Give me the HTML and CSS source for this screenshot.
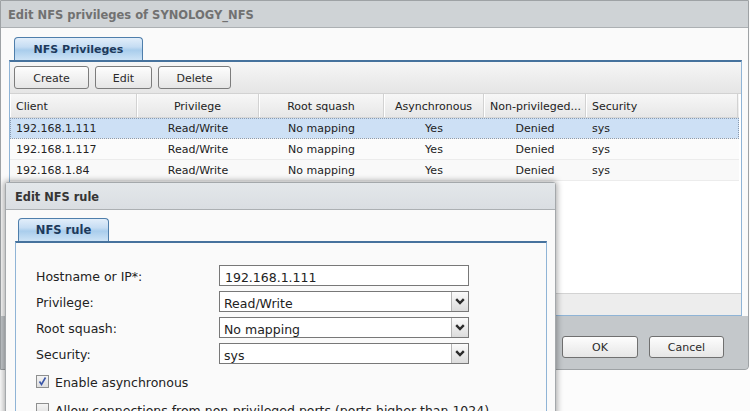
FILE: index.html
```html
<!DOCTYPE html>
<html>
<head>
<meta charset="utf-8">
<title>Edit NFS privileges</title>
<link rel="stylesheet" href="styles.css">
</head>
<body>
<div class="win outer">
  <div class="win-title outer-title">Edit NFS privileges of SYNOLOGY_NFS</div>
  <div class="win-body outer-body">
    <div class="tabs"><div class="tab tab-wide">NFS Privileges</div></div>
    <div class="panel outer-panel">
      <div class="toolbar">
        <button class="btn b-create">Create</button>
        <button class="btn b-edit">Edit</button>
        <button class="btn b-delete">Delete</button>
      </div>
      <div class="grid">
        <div class="grow ghead">
          <div class="gc left">Client</div>
          <div class="gc">Privilege</div>
          <div class="gc">Root squash</div>
          <div class="gc">Asynchronous</div>
          <div class="gc">Non-privileged...</div>
          <div class="gc left">Security</div>
        </div>
        <div class="grow gdata selected">
          <div class="gc left">192.168.1.111</div>
          <div class="gc">Read/Write</div>
          <div class="gc">No mapping</div>
          <div class="gc">Yes</div>
          <div class="gc">Denied</div>
          <div class="gc left">sys</div>
        </div>
        <div class="grow gdata">
          <div class="gc left">192.168.1.117</div>
          <div class="gc">Read/Write</div>
          <div class="gc">No mapping</div>
          <div class="gc">Yes</div>
          <div class="gc">Denied</div>
          <div class="gc left">sys</div>
        </div>
        <div class="grow gdata alt">
          <div class="gc left">192.168.1.84</div>
          <div class="gc">Read/Write</div>
          <div class="gc">No mapping</div>
          <div class="gc">Yes</div>
          <div class="gc">Denied</div>
          <div class="gc left">sys</div>
        </div>
      </div>
      <div class="grid-foot"></div>
    </div>
  </div>
  <div class="win-foot">
    <button class="btn b-ok">OK</button>
    <button class="btn b-cancel">Cancel</button>
  </div>
</div>

<div class="win inner">
  <div class="win-title inner-title">Edit NFS rule</div>
  <div class="win-body inner-body">
    <div class="tabs"><div class="tab tab-small">NFS rule</div></div>
    <div class="panel inner-panel">
      <div class="form">
        <div class="frow">
          <label class="flabel">Hostname or IP*:</label>
          <div class="field text-field">192.168.1.111</div>
        </div>
        <div class="frow">
          <label class="flabel">Privilege:</label>
          <div class="field select-field"><span class="sval">Read/Write</span><span class="sarrow"><svg width="10" height="7" viewBox="0 0 10 7"><polyline points="1.2,1.2 5,5 8.8,1.2" fill="none" stroke="#2b2b2b" stroke-width="2.4"/></svg></span></div>
        </div>
        <div class="frow">
          <label class="flabel">Root squash:</label>
          <div class="field select-field"><span class="sval">No mapping</span><span class="sarrow"><svg width="10" height="7" viewBox="0 0 10 7"><polyline points="1.2,1.2 5,5 8.8,1.2" fill="none" stroke="#2b2b2b" stroke-width="2.4"/></svg></span></div>
        </div>
        <div class="frow">
          <label class="flabel">Security:</label>
          <div class="field select-field"><span class="sval">sys</span><span class="sarrow"><svg width="10" height="7" viewBox="0 0 10 7"><polyline points="1.2,1.2 5,5 8.8,1.2" fill="none" stroke="#2b2b2b" stroke-width="2.4"/></svg></span></div>
        </div>
        <div class="crow">
          <span class="cbox"><svg width="11" height="11" viewBox="0 0 11 11"><polyline points="2.5,5.5 4.5,8.5 8.5,1.5" fill="none" stroke="#3a56a8" stroke-width="1.6"/></svg></span>
          <span class="clabel">Enable asynchronous</span>
        </div>
        <div class="crow">
          <span class="cbox"></span>
          <span class="clabel">Allow connections from non-privileged ports (ports higher than 1024)</span>
        </div>
      </div>
    </div>
  </div>
</div>
</body>
</html>
```

FILE: styles.css
```css
* { box-sizing: border-box; }

html, body {
  margin: 0;
  padding: 0;
  width: 750px;
  height: 411px;
  overflow: hidden;
  background: #fcfcfc;
  font-family: "DejaVu Sans", Verdana, sans-serif;
  font-size: 11px;
  color: #222;
}

.win {
  position: absolute;
  display: flex;
  flex-direction: column;
  border: 1px solid #9ea2a5;
}

.outer {
  left: 0;
  top: 0;
  width: 749px;
  height: 370px;
  border-radius: 0 0 4px 0;
  background: #c4c8cb;
}

.win-title {
  height: 27px;
  line-height: 28px;
  font-weight: bold;
  border-bottom: 1px solid #acb0b3;
  padding-left: 7px;
  white-space: nowrap;
}

.outer-title {
  background: #cfd3d6;
  color: #717171;
  font-size: 11.5px;
}

.win-body {
  background: #fafafa;
}

.outer-body {
  padding: 9px 7px 0 8px;
}

.tabs {
  display: flex;
  height: 23px;
}

.tab {
  height: 23px;
  border: 1px solid #4e7eab;
  border-bottom: none;
  border-radius: 4px 4px 0 0;
  background: linear-gradient(#e2eefa 0%, #c6ddf3 40%, #a9cdec 55%, #cde3f6 100%);
  color: #1d3a5c;
  font-weight: bold;
  text-align: center;
  line-height: 23px;
}

.tab-wide {
  width: 129px;
  margin-left: 5px;
}

.tab-small {
  width: 91px;
  margin-left: 3px;
  font-size: 11.5px;
  line-height: 23px;
}

.panel {
  border: 1px solid #8fb4d6;
  border-top: 2px solid #46729d;
}

.outer-panel {
  width: 733px;
  background: #fff;
}

.toolbar {
  height: 32px;
  display: flex;
  gap: 6px;
  padding: 4px 0 0 4px;
  background: linear-gradient(#f6f6f6, #e5e5e5);
  border-bottom: 1px solid #d2d2d2;
}

.btn {
  font-family: "DejaVu Sans", Verdana, sans-serif;
  font-size: 11px;
  color: #2a2a2a;
  height: 23px;
  padding: 1px 0 0 0;
  border: 1px solid #7c7c7c;
  border-radius: 3px;
  background: linear-gradient(#fdfdfd, #e6e6e6);
}

.b-create { width: 75px; }
.b-edit { width: 57px; }
.b-delete { width: 73px; }

.grid {
  height: 199px;
  background: #fff;
}

.grow {
  display: grid;
  grid-template-columns: 127px 122px 125px 100px 102px 152px;
  width: 729px;
}

.gc {
  text-align: center;
  white-space: nowrap;
  overflow: hidden;
  padding: 0 6px;
}

.gc.left {
  text-align: left;
}

.ghead {
  height: 24px;
  line-height: 26px;
  background: linear-gradient(#f7f7f7, #e7e7e7);
  border-bottom: 1px solid #d6d6d6;
}

.ghead .gc {
  border-right: 1px solid #d2d2d2;
  box-shadow: inset 1px 0 0 #fff;
}

.gdata {
  height: 21px;
  line-height: 22px;
  background: #fbfbfb;
  border-bottom: 1px solid #ececec;
}

.gdata.alt {
  background: #f9f9f9;
}

.gdata.selected {
  background: #cde0f5;
  outline: 1px dotted #8a9bb0;
  outline-offset: -1px;
}

.grid-foot {
  height: 22px;
  background: #ededed;
  border-top: 1px solid #d3d3d3;
}

.win-foot {
  flex: 1;
  display: flex;
  justify-content: flex-end;
  gap: 11px;
  padding: 20px 24px 0 0;
  background: #c4c8cb;
  border-radius: 0 0 4px 0;
}

.b-ok { width: 76px; height: 22px; border-color: #707070; }
.b-cancel { width: 75px; height: 22px; border-color: #707070; }

/* inner dialog */
.inner {
  left: 5px;
  top: 182px;
  width: 551px;
  height: 260px;
  border-color: #a4a8ab;
  border-radius: 3px 3px 0 0;
  background: #fafafa;
  box-shadow: 0 0 6px 1px rgba(0, 0, 0, 0.35);
}

.inner-title {
  background: linear-gradient(#e3e7ea, #dadee2);
  color: #353535;
  font-size: 11.4px;
  padding-left: 9px;
}

.inner-body {
  flex: 1;
  padding: 8px 8px 0 9px;
}

.inner-panel {
  height: 200px;
  background: #fafafa;
}

.form {
  padding: 22px 0 0 20px;
  font-size: 12.5px;
  color: #222;
}

.frow {
  display: flex;
  align-items: center;
  height: 21px;
  margin-bottom: 5px;
}

.flabel {
  width: 183px;
  padding-top: 2px;
}

.field {
  width: 250px;
  height: 21px;
  border: 1px solid #787878;
  background: #fff;
  line-height: 23px;
}

.text-field {
  padding-left: 5px;
}

.select-field {
  display: flex;
}

.sval {
  flex: 1;
  padding-left: 4px;
}

.sarrow {
  width: 17px;
  border-left: 1px solid #b5b5b5;
  background: linear-gradient(#fbfbfb, #dcdcdc);
  display: flex;
  align-items: center;
  justify-content: center;
}

.crow {
  display: flex;
  align-items: center;
  height: 21px;
  margin-top: 7px;
  white-space: nowrap;
}

.cbox {
  width: 13px;
  height: 13px;
  border: 1px solid #8e8f8f;
  background: linear-gradient(#f4f4f4, #dedede);
  display: flex;
  align-items: center;
  justify-content: center;
  margin-right: 6px;
}

.clabel {
  font-size: 12.5px;
  padding-top: 2px;
}
```
